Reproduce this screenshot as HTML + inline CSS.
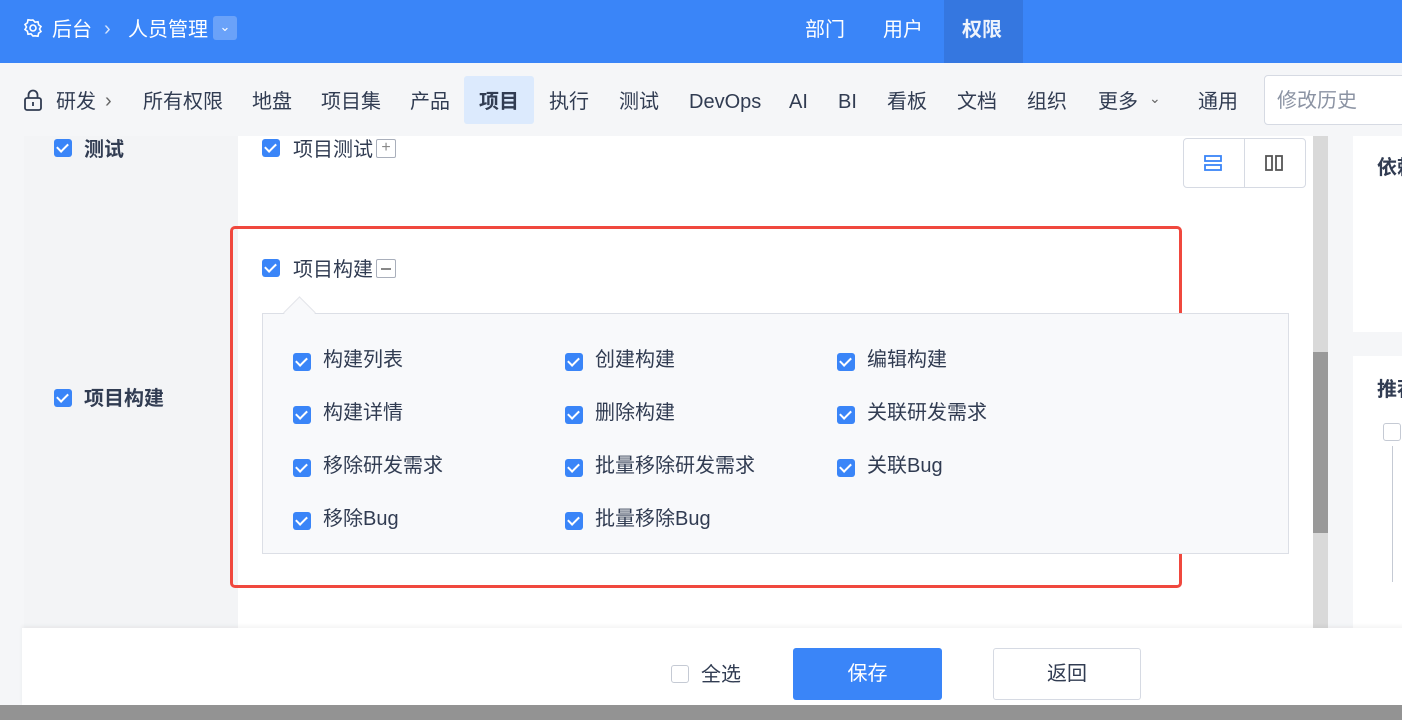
<!DOCTYPE html>
<html><head><meta charset="utf-8"><style>
*{margin:0;padding:0;box-sizing:border-box}
body{width:1402px;height:720px;overflow:hidden;position:relative;background:#f5f6f8;font-family:"Liberation Sans","Noto Sans CJK SC",sans-serif;color:#313c52}
.a{position:absolute;white-space:nowrap}
.t{font-size:20px;line-height:24px;margin-top:1px}
.cb{position:absolute;width:18px;height:18px;border-radius:3px;background:#3a85f8}
.cb:after{content:"";position:absolute;left:5px;top:2px;width:5px;height:9px;border:solid #fff;border-width:0 2.5px 2.5px 0;transform:rotate(45deg)}
.ub{position:absolute;width:18px;height:18px;border-radius:3px;border:1px solid #c5cad4;background:#fff}
</style></head><body>
<div class="a" style="left:0;top:0;width:1402px;height:63px;background:#3a85f8"></div>
<svg class="a" style="left:23px;top:18px" width="20" height="20" viewBox="0 0 20 20" fill="none" stroke="#fff" stroke-width="1.6"><circle cx="10" cy="10" r="3"/><path d="M10 2l2 2.2 3-.4.6 3 2.4 1.7-1.5 2.5 1.5 2.5-2.4 1.7-.6 3-3-.4L10 18l-2-2.2-3 .4-.6-3L2 11.5 3.5 9 2 6.5l2.4-1.7.6-3 3 .4z"/></svg>
<div class="a t" style="left:52px;top:17px;color:#fff">后台</div>
<div class="a t" style="left:104px;top:16px;color:#d5e4fd">›</div>
<div class="a t" style="left:128px;top:17px;color:#fff">人员管理</div>
<div class="a" style="left:213px;top:16px;width:24px;height:24px;background:#6aa2f9;border-radius:3px;color:#fff;font-size:13px;text-align:center;line-height:22px">⌄</div>
<div class="a t" style="left:805px;top:17px;color:#fff">部门</div>
<div class="a t" style="left:883px;top:17px;color:#fff">用户</div>
<div class="a" style="left:944px;top:0;width:79px;height:63px;background:#3577e0"></div>
<div class="a t" style="left:962px;top:17px;color:#eef3fc;font-weight:bold">权限</div>

<svg class="a" style="left:23px;top:89px" width="20" height="22" viewBox="0 0 20 22" fill="none" stroke="#313c52" stroke-width="1.8"><rect x="2" y="9" width="16" height="12" rx="2"/><path d="M5.5 9V6a4.5 4.5 0 0 1 9 0v3M10 13v4"/></svg>
<div class="a t" style="left:56px;top:89px">研发</div>
<div class="a t" style="left:105px;top:88px;color:#666">›</div>
<div class="a t" style="left:143px;top:89px">所有权限</div>
<div class="a t" style="left:252px;top:89px">地盘</div>
<div class="a t" style="left:321px;top:89px">项目集</div>
<div class="a t" style="left:410px;top:89px">产品</div>
<div class="a" style="left:464px;top:76px;width:70px;height:48px;background:#dceafd;border-radius:3px"></div>
<div class="a t" style="left:479px;top:89px;font-weight:bold">项目</div>
<div class="a t" style="left:549px;top:89px">执行</div>
<div class="a t" style="left:619px;top:89px">测试</div>
<div class="a t" style="left:689px;top:89px">DevOps</div>
<div class="a t" style="left:789px;top:89px">AI</div>
<div class="a t" style="left:838px;top:89px">BI</div>
<div class="a t" style="left:887px;top:89px">看板</div>
<div class="a t" style="left:957px;top:89px">文档</div>
<div class="a t" style="left:1027px;top:89px">组织</div>
<div class="a t" style="left:1098px;top:89px">更多</div>
<div class="a" style="left:1149px;top:90px;font-size:14px;color:#666">⌄</div>
<div class="a t" style="left:1198px;top:89px">通用</div>
<div class="a" style="left:1264px;top:75px;width:150px;height:50px;background:#fff;border:1px solid #d6dae3;border-radius:4px"></div>
<div class="a t" style="left:1277px;top:88px;color:#8b93a3">修改历史</div>

<div class="a" style="left:24px;top:136px;width:214px;height:492px;background:#f3f4f6"></div>
<div class="a" style="left:238px;top:136px;width:1075px;height:492px;background:#fff"></div>
<div class="a" style="left:1313px;top:136px;width:15px;height:492px;background:#d9d9d9"></div>
<div class="a" style="left:1313px;top:352px;width:15px;height:181px;background:#999"></div>
<div class="a" style="left:1353px;top:136px;width:60px;height:196px;background:#fff"></div>
<div class="a" style="left:1353px;top:356px;width:60px;height:272px;background:#fff"></div>
<div class="a t" style="left:1377px;top:155px;font-weight:bold">依赖</div>
<div class="a t" style="left:1377px;top:377px;font-weight:bold">推荐</div>
<div class="ub" style="left:1383px;top:423px"></div>
<div class="a" style="left:1392px;top:446px;width:1px;height:136px;background:#c5cad4"></div>

<div class="cb" style="left:54px;top:139px"></div>
<div class="a t" style="left:84px;top:137px;font-weight:bold">测试</div>
<div class="cb" style="left:262px;top:139px"></div>
<div class="a t" style="left:293px;top:137px">项目测试</div>
<div class="a" style="left:376px;top:139px;width:20px;height:19px;border:1px solid #a9afbb;border-radius:2px;color:#888;font-size:16px;line-height:16px;text-align:center">+</div>
<div class="a" style="left:1183px;top:138px;width:123px;height:50px;border:1px solid #d6dae3;border-radius:4px;background:#fff"></div>
<div class="a" style="left:1244px;top:138px;width:1px;height:50px;background:#d6dae3"></div>
<svg class="a" style="left:1203px;top:154px" width="20" height="18" viewBox="0 0 20 18" fill="none" stroke="#3a85f8" stroke-width="1.8"><rect x="2" y="2" width="16" height="5"/><rect x="2" y="11" width="16" height="5"/></svg>
<svg class="a" style="left:1264px;top:154px" width="20" height="18" viewBox="0 0 20 18" fill="none" stroke="#555" stroke-width="1.8"><rect x="2" y="2" width="6" height="14"/><rect x="12" y="2" width="6" height="14"/></svg>

<div class="cb" style="left:54px;top:389px"></div>
<div class="a t" style="left:84px;top:386px;font-weight:bold">项目构建</div>

<div class="a" style="left:230px;top:226px;width:952px;height:362px;border:3px solid #f0483e;border-radius:5px"></div>
<div class="cb" style="left:262px;top:259px"></div>
<div class="a t" style="left:293px;top:257px">项目构建</div>
<div class="a" style="left:376px;top:259px;width:20px;height:19px;border:1px solid #a9afbb;border-radius:2px"><div style="position:absolute;left:4px;top:8px;width:10px;height:1.5px;background:#888"></div></div>
<div class="a" style="left:262px;top:313px;width:1027px;height:241px;background:#f8f9fb;border:1px solid #dcdfe6"></div>
<div class="a" style="left:288px;top:301px;width:23px;height:23px;background:#f8f9fb;border-left:1px solid #e3e5ea;border-top:1px solid #e3e5ea;transform:rotate(45deg)"></div>

<div class="cb" style="left:293px;top:353px"></div><div class="a t" style="left:323px;top:347px">构建列表</div>
<div class="cb" style="left:565px;top:353px"></div><div class="a t" style="left:595px;top:347px">创建构建</div>
<div class="cb" style="left:837px;top:353px"></div><div class="a t" style="left:867px;top:347px">编辑构建</div>
<div class="cb" style="left:293px;top:406px"></div><div class="a t" style="left:323px;top:400px">构建详情</div>
<div class="cb" style="left:565px;top:406px"></div><div class="a t" style="left:595px;top:400px">删除构建</div>
<div class="cb" style="left:837px;top:406px"></div><div class="a t" style="left:867px;top:400px">关联研发需求</div>
<div class="cb" style="left:293px;top:459px"></div><div class="a t" style="left:323px;top:453px">移除研发需求</div>
<div class="cb" style="left:565px;top:459px"></div><div class="a t" style="left:595px;top:453px">批量移除研发需求</div>
<div class="cb" style="left:837px;top:459px"></div><div class="a t" style="left:867px;top:453px">关联Bug</div>
<div class="cb" style="left:293px;top:512px"></div><div class="a t" style="left:323px;top:506px">移除Bug</div>
<div class="cb" style="left:565px;top:512px"></div><div class="a t" style="left:595px;top:506px">批量移除Bug</div>

<div class="a" style="left:22px;top:628px;width:1390px;height:77px;background:#fff;box-shadow:0 -2px 4px rgba(0,0,0,.05)"></div>
<div class="ub" style="left:671px;top:665px"></div>
<div class="a t" style="left:701px;top:662px">全选</div>
<div class="a" style="left:793px;top:648px;width:149px;height:52px;background:#3a85f8;border-radius:3px;color:#fff;font-size:20px;line-height:52px;text-align:center">保存</div>
<div class="a" style="left:993px;top:648px;width:148px;height:52px;background:#fff;border:1px solid #d6dae3;border-radius:3px;font-size:20px;line-height:50px;text-align:center">返回</div>
<div class="a" style="left:0;top:705px;width:1402px;height:15px;background:#939393"></div>
</body></html>
